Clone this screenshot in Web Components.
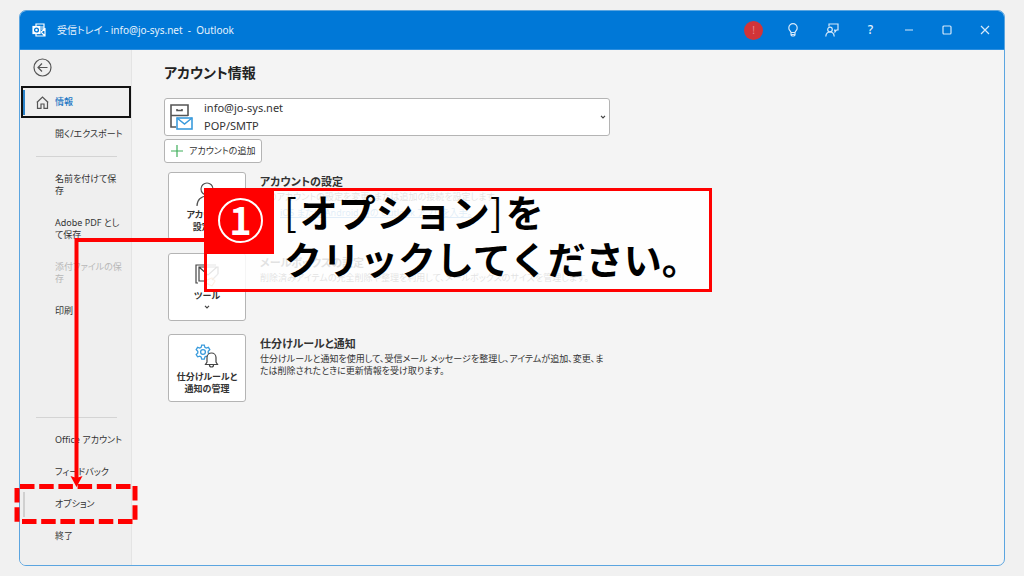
<!DOCTYPE html>
<html lang="ja">
<head>
<meta charset="utf-8">
<meta name="viewport" content="width=device-width, initial-scale=1">
<title>受信トレイ - Outlook</title>
<style>
  *, *::before, *::after { box-sizing: border-box; }
  body {
    margin: 0;
    min-height: 100vh;
    display: flex;
    padding: 10px 19px;
    background: #f1f1f1;
    color: #333;
    font-family: "Noto Sans", "Noto Sans CJK JP", sans-serif;
    font-size: 9px;
    line-height: 12px;
    font-feature-settings: "palt";
  }
</style>
</head>
<body>
<outlook-window>
  <title-bar slot="title">受信トレイ - info@jo-sys.net&nbsp; -&nbsp; Outlook</title-bar>
  <nav-pane slot="nav">
    <nav-item selected>情報</nav-item>
    <nav-item>開く/エクスポート</nav-item>
    <nav-rule></nav-rule>
    <nav-item tall>名前を付けて保<br>存</nav-item>
    <nav-item tall>Adobe PDF とし<br>て保存</nav-item>
    <nav-item tall disabled>添付ファイルの保<br>存</nav-item>
    <nav-item>印刷</nav-item>
    <nav-rule slot="bottom"></nav-rule>
    <nav-item slot="bottom">Office アカウント</nav-item>
    <nav-item slot="bottom">フィードバック</nav-item>
    <nav-item slot="bottom" hovered>オプション</nav-item>
    <nav-item slot="bottom">終了</nav-item>
  </nav-pane>
  <account-page>
    <info-section>
      <svg slot="icon" width="24" height="24" viewBox="0 0 24 24" fill="none" stroke="#555" stroke-width="1.2"><circle cx="12" cy="7" r="6"/><path d="M2 24c0-6 4-10 10-10s10 4 10 10"/></svg>
      <span slot="action">アカウント<br>設定 ⌄</span>
      <span slot="heading">アカウントの設定</span>
      このアカウントの設定を変更、または追加の接続を設定します。
      <app-link slot="more">iOS または Android 用の Outlook アプリを入手。</app-link>
    </info-section>
    <info-section>
      <svg slot="icon" width="24" height="24" viewBox="0 0 24 24" fill="none" stroke="#444" stroke-width="1.2"><path d="M3 20H1V2h20"/><path d="M12 18H4V4h19v7M4 4l9 8 9-8"/><path d="M23 11l-6 6" stroke="#777"/><path d="M12 17l5-2 3 3-3 5-6-3z" stroke="#e39b52"/></svg>
      <span slot="action">ツール</span>
      <svg slot="action" width="6" height="4" viewBox="0 0 6 4" fill="none" stroke="#444" stroke-width="1.2"><path d="M1 .8l2 2 2-2"/></svg>
      <span slot="heading">メールボックスの設定</span>
      削除済みアイテムの完全削除や整理を利用して、メールボックスのサイズを管理します。
    </info-section>
    <info-section>
      <svg slot="icon" width="24" height="24" viewBox="0 0 24 24" fill="none"><path d="M6.7 1.2h2.6l.6 2.2 1.3.7 2.2-.8 1.4 2.4-1.6 1.6v1.6l1.6 1.6-1.4 2.3-2.2-.7-1.3.8-.6 2.2H6.7l-.6-2.2-1.3-.8-2.2.7-1.4-2.3 1.6-1.6V7.3L1.200 5.7l1.4-2.4 2.2.8 1.3-.7z" stroke="#3a9bdc" stroke-width="1.3"/><circle cx="8" cy="8" r="2.4" stroke="#3a9bdc" stroke-width="1.3"/><path d="M10.5 20.5h12l-1.500-2.500v-4.500a4.500 4.500 0 0 0-9 0V18z" fill="#fff" stroke="#444" stroke-width="1.2"/><path d="M14.5 21a2 2 0 0 0 4 0" stroke="#444" stroke-width="1.2"/></svg>
      <span slot="action">仕分けルールと<br>通知の管理</span>
      <span slot="heading">仕分けルールと通知</span>
      仕分けルールと通知を使用して、受信メール メッセージを整理し、アイテムが追加、変更、ま<br>たは削除されたときに更新情報を受け取ります。
    </info-section>
  </account-page>
  <step-callout slot="overlay" step="1">
    <b>[</b>オプション<b>]</b>を<br>クリックしてください。
  </step-callout>
</outlook-window>

<script>
const define = (name, html, setup) => {
  const template = document.createElement('template');
  template.innerHTML = '<style>*,*::before,*::after{box-sizing:border-box}' +
    'button,select{font:inherit;font-feature-settings:inherit;color:inherit;margin:0;padding:0;border:0;background:none}' +
    'svg{display:block;flex:none}</style>' + html;
  customElements.define(name, class extends HTMLElement {
    constructor() {
      super();
      this.attachShadow({ mode: 'open' }).append(template.content.cloneNode(true));
    }
    connectedCallback() { if (setup) setup(this, this.shadowRoot); }
  });
};

define('outlook-window', `
  <style>
    :host { position: relative; flex: 1; display: flex; min-width: 0; }
    .frame { flex: 1; min-width: 0; display: flex; flex-direction: column; border: 1px solid #5ba5e0; border-radius: 7px; overflow: hidden; background: #f4f4f4; }
    .body { flex: 1; display: flex; }
  </style>
  <div class="frame">
    <slot name="title"></slot>
    <div class="body"><slot name="nav"></slot><slot></slot></div>
  </div>
  <slot name="overlay"></slot>`);

define('title-bar', `
  <style>
    :host { display: flex; align-items: center; height: 39px; padding-left: 12px; background: #0078d7; color: #e6f2fc; font-size: 10px; border-bottom: 1px solid #2b8edf; }
    .title { flex: 1; padding-left: 11px; white-space: nowrap; }
    .tools, .controls { display: flex; }
    button { height: 38px; display: grid; place-items: center; }
    .tools button { width: 39px; }
    .controls button { width: 38px; }
    .alert i { display: grid; place-items: center; width: 19px; height: 19px; border-radius: 50%; background: #d13438; color: #e8888b; font-style: normal; }
    svg { fill: none; stroke: #d4e8fa; stroke-width: 1.2; }
    .help { font-size: 12px; font-weight: 500; }
  </style>
  <svg width="14" height="14" viewBox="0 0 14 14"><path d="M4 3V1h8v6M4 11v2h9V6l-4 3M9 4h3M9 6h3M9 9l4 4" stroke="#fff"/><rect x="1" y="3.500" width="7" height="7" fill="#fff" stroke="#fff"/><circle cx="4.500" cy="7" r="1.900" stroke="#0078d7" stroke-width="1.400"/></svg>
  <span class="title"><slot></slot></span>
  <div class="tools">
    <button class="alert" aria-label="アラート"><i>!</i></button>
    <button aria-label="ヒント"><svg width="12" height="14" viewBox="0 0 12 14"><path d="M4 9.500C3.700 8 1.800 7.300 1.800 4.900a4.200 4.200 0 0 1 8.400 0C10.200 7.300 8.300 8 8 9.500zM4 9.500V12l1 1h2l1-1V9.500M4 11.500h4"/></svg></button>
    <button aria-label="フィードバック"><svg width="14" height="14" viewBox="0 0 14 14"><path d="M4 3.500V1h9v6h-1.500L10 9V7.200H9"/><circle cx="5" cy="6.500" r="2.300"/><path d="M.8 13.500C1 10.500 2.500 9 5 9s4 1.500 4.200 4.500"/></svg></button>
    <button class="help" aria-label="ヘルプ">?</button>
  </div>
  <div class="controls">
    <button aria-label="最小化"><svg width="10" height="10" viewBox="0 0 10 10"><path d="M1 5h8"/></svg></button>
    <button aria-label="最大化"><svg width="10" height="10" viewBox="0 0 10 10"><rect x="1" y="1" width="8" height="8" rx="1"/></svg></button>
    <button aria-label="閉じる"><svg width="10" height="10" viewBox="0 0 10 10"><path d="M1 1l8 8M9 1L1 9"/></svg></button>
  </div>`);

define('nav-pane', `
  <style>
    :host { flex: none; width: 112px; display: flex; flex-direction: column; background: #efefef; border-right: 1px solid #e4e4e4; padding: 0 0 13px 1px; }
    nav { flex: 1; display: flex; flex-direction: column; }
    .back { align-self: flex-start; margin: 8px 12px 9px; }
    .space { flex: 1; }
  </style>
  <nav>
    <button class="back" aria-label="戻る"><svg width="19" height="19" viewBox="0 0 19 19" fill="none" stroke="#555" stroke-width="1.200"><circle cx="9.500" cy="9.500" r="8.500"/><path d="M14.500 9.500H5M9 5.500l-4 4 4 4"/></svg></button>
    <slot></slot>
    <div class="space"></div>
    <slot name="bottom"></slot>
  </nav>`);

define('nav-item', `
  <style>
    :host { display: block; }
    button { display: flex; align-items: center; width: 100%; height: 32px; padding-left: 34px; text-align: left; white-space: nowrap; }
    :host([tall]) button { height: 44px; }
    :host([disabled]) { color: #b8b8b8; }
    :host([selected]) button { border: 2px solid #111; padding-left: 0; color: #1a76c4; font-weight: 500; }
    :host([hovered]) button { padding-left: 2px; }
    svg, .bar { display: none; }
    :host([selected]) .bar, :host([hovered]) .bar { display: block; width: 2px; height: 25px; background: #2b83c9; }
    :host([hovered]) .bar { background: #d0d0d0; margin-right: 30px; }
    :host([selected]) svg { display: block; margin: 0 6px 0 11px; }
  </style>
  <button><span class="bar"></span><svg width="13" height="13" viewBox="0 0 13 13" fill="none" stroke="#555" stroke-width="1.200"><path d="M.8 6.500L6.500 1l5.700 5.500M1.500 6v6.400H5V8h3v4.400h3.500V6"/></svg><span><slot></slot></span></button>`,
  (host, root) => { root.querySelector('button').disabled = host.hasAttribute('disabled'); });

define('nav-rule', `
  <style>:host { display: block; height: 1px; margin: 6px 14px 6px 15px; background: #d4d4d4; }</style>`);

define('account-picker', `
  <style>
    :host { display: flex; align-items: center; width: 446px; max-width: 100%; height: 38px; padding: 0 3px 0 5px; background: #fff; border: 1px solid #b4b4b4; border-radius: 3px; font-size: 11px; }
    label { flex: 1; display: flex; flex-direction: column; padding-left: 10px; line-height: 18px; }
    select { appearance: none; width: 100%; height: 18px; line-height: 18px; outline: 0; }
  </style>
  <svg width="24" height="26" viewBox="0 0 24 26" fill="none" stroke="#555" stroke-width="1.600"><path d="M18 12V1H1v22h5M1 11.500h17M7 5v1.500h5V5"/><rect x="7" y="14" width="15" height="11" fill="#fff" stroke="#3a9bdc"/><path d="M7 14l7.500 6 7.500-6" stroke="#3a9bdc"/></svg>
  <label><select aria-label="アカウント"><option>info@jo-sys.net</option></select><span>POP/SMTP</span></label>
  <svg width="6" height="4" viewBox="0 0 6 4" fill="none" stroke="#444" stroke-width="1.200"><path d="M1 .8l2 2 2-2"/></svg>`);

define('account-page', `
  <style>
    :host { flex: 1; min-width: 0; display: block; padding: 12px 32px; }
    h1 { margin: 0 0 14px; font-size: 14px; line-height: 22px; font-weight: 600; color: #222; }
    .add { display: flex; align-items: center; gap: 6px; height: 24px; margin-top: 3px; padding: 0 6px; background: #fff; border: 1px solid #b4b4b4; border-radius: 3px; }
    .sections { display: grid; gap: 13px; margin-top: 9px; padding-left: 4px; }
  </style>
  <h1>アカウント情報</h1>
  <account-picker></account-picker>
  <button class="add"><svg width="12" height="12" viewBox="0 0 12 12" stroke="#3fae5a" stroke-width="1.200"><path d="M6 0v12M0 6h12"/></svg>アカウントの追加</button>
  <div class="sections"><slot></slot></div>`);

define('info-section', `
  <style>
    :host { display: flex; gap: 14px; }
    button { flex: none; display: flex; flex-direction: column; align-items: center; width: 78px; height: 68px; padding-top: 9px; background: #fff; border: 1px solid #b4b4b4; border-radius: 3px; font-weight: 700; gap: 3px; }
    .text { min-width: 0; }
    h2 { margin: 0; font-size: 11px; line-height: 19px; font-weight: 600; }
    p { margin: 0; }
  </style>
  <button><slot name="icon"></slot><slot name="action"></slot></button>
  <div class="text"><h2><slot name="heading"></slot></h2><p><slot></slot></p><slot name="more"></slot></div>`);

define('app-link', `
  <style>:host { display: block; padding: 4px 0 0 20px; } a { color: #2b83c9; }</style>
  <a href="#"><slot></slot></a>`);

define('step-callout', `
  <style>
    :host { position: absolute; left: 185px; top: 178px; display: block; }
    .box { display: flex; width: 508px; height: 104px; border: 3px solid #f00; background: rgba(255, 255, 255, .86); }
    .step { flex: none; display: grid; place-items: center; width: 67px; height: 63px; padding-bottom: 4px; background: #f00; }
    .step span { display: grid; place-items: center; width: 45px; height: 45px; padding-bottom: 4px; border: 2px solid #fff; border-radius: 50%; color: #fff; font: 700 38px/38px "Noto Sans CJK JP", sans-serif; }
    .message { margin-top: -4px; padding-left: 10px; color: #000; font: 700 38px/47px "Noto Sans CJK JP", sans-serif; font-feature-settings: normal; white-space: nowrap; }
    ::slotted(b) { font-weight: 400; margin-right: 3px; }
    .pointer { position: absolute; left: -192px; top: 46px; }
  </style>
  <div class="box"><div class="step"><span></span></div><div class="message"><slot></slot></div></div>
  <svg class="pointer" width="194" height="292" viewBox="12 234 194 292" fill="none" stroke="#f00">
    <path d="M206 240H76.500V478" stroke-width="4"/>
    <path d="M76.500 487l-6-11 6 2 6-2z" fill="#f00" stroke="none"/>
    <path d="M20 486.500h114M22 521.500h112" stroke-width="5" stroke-dasharray="14.500 4.700"/>
    <path d="M17 488v34M135 486v34" stroke-width="5" stroke-dasharray="14.500 4.700"/>
  </svg>`,
  (host, root) => { root.querySelector('.step span').textContent = host.getAttribute('step'); });
</script>
</body>
</html>
